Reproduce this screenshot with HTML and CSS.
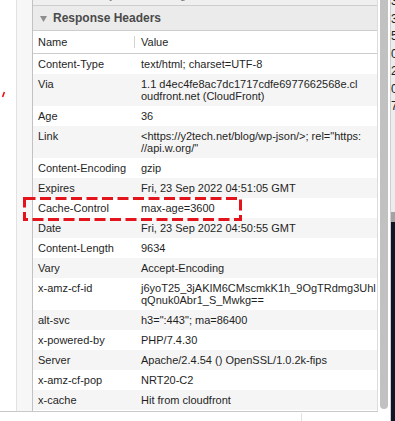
FILE: index.html
```html
<!DOCTYPE html>
<html lang="en">
<head>
  <meta charset="UTF-8">
  <meta name="viewport" content="width=device-width, initial-scale=1.0">
  <title>Response Headers</title>
  <link rel="stylesheet" href="styles.css">
</head>
<body>
  <div class="main">
    <div class="view">
      <div class="gutter"></div>
      <div class="sidebar"></div>
      <div class="panel">
        <div class="prev-row">
          <span class="prev-name">Referrer Policy</span>
          <span class="prev-value">strict-origin-when</span>
        </div>
        <div class="section-head">
          <svg class="caret" width="7" height="6" viewBox="0 0 7 6"><polygon points="0,0 7,0 3.5,6" fill="#8e8e8e"/></svg>
          Response Headers
        </div>
        <table class="headers">
          <colgroup>
            <col class="col-name">
            <col>
          </colgroup>
          <thead>
            <tr>
              <th>Name</th>
              <th class="val"><span class="sep">Value</span></th>
            </tr>
          </thead>
          <tbody>
            <tr><td>Content-Type</td><td class="val">text/html; charset=UTF-8</td></tr>
            <tr><td>Via</td><td class="val">1.1 d4ec4fe8ac7dc1717cdfe6977662568e.cl<br>oudfront.net (CloudFront)</td></tr>
            <tr><td>Age</td><td class="val">36</td></tr>
            <tr><td>Link</td><td class="val">&lt;https://y2tech.net/blog/wp-json/&gt;; rel="https:<br>//api.w.org/"</td></tr>
            <tr><td>Content-Encoding</td><td class="val">gzip</td></tr>
            <tr><td>Expires</td><td class="val">Fri, 23 Sep 2022 04:51:05 GMT</td></tr>
            <tr><td>Cache-Control</td><td class="val">max-age=3600</td></tr>
            <tr><td>Date</td><td class="val">Fri, 23 Sep 2022 04:50:55 GMT</td></tr>
            <tr><td>Content-Length</td><td class="val">9634</td></tr>
            <tr><td>Vary</td><td class="val">Accept-Encoding</td></tr>
            <tr><td>x-amz-cf-id</td><td class="val">j6yoT25_3jAKIM6CMscmkK1h_9OgTRdmg3Uhl<br>qQnuk0Abr1_S_Mwkg==</td></tr>
            <tr><td>alt-svc</td><td class="val">h3=":443"; ma=86400</td></tr>
            <tr><td>x-powered-by</td><td class="val">PHP/7.4.30</td></tr>
            <tr><td>Server</td><td class="val">Apache/2.4.54 () OpenSSL/1.0.2k-fips</td></tr>
            <tr><td>x-amz-cf-pop</td><td class="val">NRT20-C2</td></tr>
            <tr><td>x-cache</td><td class="val">Hit from cloudfront</td></tr>
          </tbody>
        </table>
      </div>
    </div>
  </div>
  <div class="scrollbar"><div class="thumb"></div></div>
  <div class="edge">
    <div class="edge-top">
      <div class="edge-digits">3<br>3<br>5<br>0<br>2<br>0<br>7</div>
    </div>
    <div class="edge-band"></div>
    <div class="edge-dark"></div>
  </div>

  <!-- annotations drawn over the screenshot -->
  <svg class="mark" width="6" height="9" viewBox="0 0 6 9"><line x1="4.4" y1="2" x2="2.6" y2="7" stroke="#e3141b" stroke-width="1.6"/></svg>
  <svg class="highlight" width="219" height="24" viewBox="0 0 219 24">
    <rect x="1.5" y="1.5" width="216" height="21" fill="none" stroke="#e3141b" stroke-width="3" stroke-dasharray="11 4.5"/>
  </svg>
  <div class="tick"></div>
</body>
</html>
```

FILE: styles.css
```css
body {
  margin: 0;
  width: 395px;
  height: 421px;
  overflow: hidden;
  display: flex;
  position: relative;
  background-color: #fff;
  font-family: "Liberation Sans", Arial, sans-serif;
  font-size: 11px;
  color: #1f1f1f;
}
.main {
  width: 378px;
}
.view {
  display: flex;
  height: 411px;
  border-bottom: 1px solid #c9c9c9;
}
.gutter {
  width: 16px;
}
.sidebar {
  width: 15px;
  border-left: 1px solid #e2e2e2;
  background-color: #f7f7f7;
}
.panel {
  flex: 1;
  overflow: hidden;
  border-left: 1px solid #c2c2c2;
  border-right: 1px solid #dcdcdc;
}
.prev-row {
  display: flex;
  height: 5px;
  overflow: hidden;
  background-color: #efefef;
  border-bottom: 1px solid #cdcdcd;
  color: #777;
  line-height: 12px;
}
.prev-row span {
  margin-top: -11px;
}
.prev-name {
  padding-left: 9px;
  width: 99px;
}
.section-head {
  display: flex;
  align-items: center;
  height: 24px;
  padding-left: 7px;
  background-color: #ebebeb;
  border-bottom: 1px solid #cdcdcd;
  font-size: 12px;
  font-weight: bold;
  color: #4a4a4a;
}
.caret {
  margin: 2px 6px 0 0;
}
.headers {
  width: 100%;
  table-layout: fixed;
  border-collapse: separate;
  border-spacing: 0;
}
.col-name {
  width: 101px;
}
th {
  height: 22px;
  padding: 0 5px;
  text-align: left;
  font-weight: normal;
  border-bottom: 1px solid #cdcdcd;
}
th.val {
  padding-left: 0;
}
.sep {
  display: inline-block;
  padding-left: 6px;
  line-height: 12px;
  border-left: 1px solid #d2d2d2;
}
td {
  padding: 4px 5px;
  line-height: 12px;
  vertical-align: top;
  white-space: nowrap;
}
td.val {
  padding-left: 7px;
}
tbody tr:nth-child(even) td {
  background-color: #f5f5f5;
}
.scrollbar {
  width: 12px;
  height: 421px;
  border-right: 1px solid #cfcfcf;
  background-color: #fff;
}
.thumb {
  width: 8px;
  height: 409px;
  margin-left: 2px;
  background-color: #c1c1c1;
  border-radius: 0 0 4px 4px;
}
.edge {
  display: flex;
  flex-direction: column;
  width: 4px;
  height: 421px;
}
.edge-top {
  height: 212px;
  overflow: hidden;
  background-color: #ececec;
}
.edge-digits {
  margin-top: -7px;
  font-size: 12px;
  line-height: 17.5px;
  color: #222;
}
.edge-band {
  height: 10px;
  background-color: #a3a3a3;
}
.edge-dark {
  flex: 1;
  background-color: #0f1727;
}
.mark {
  position: absolute;
  left: 0;
  top: 90px;
}
.highlight {
  position: absolute;
  left: 23px;
  top: 197px;
}
.tick {
  position: absolute;
  left: 301px;
  top: 413px;
  width: 1px;
  height: 8px;
  background-color: #e0e0e0;
}
```
